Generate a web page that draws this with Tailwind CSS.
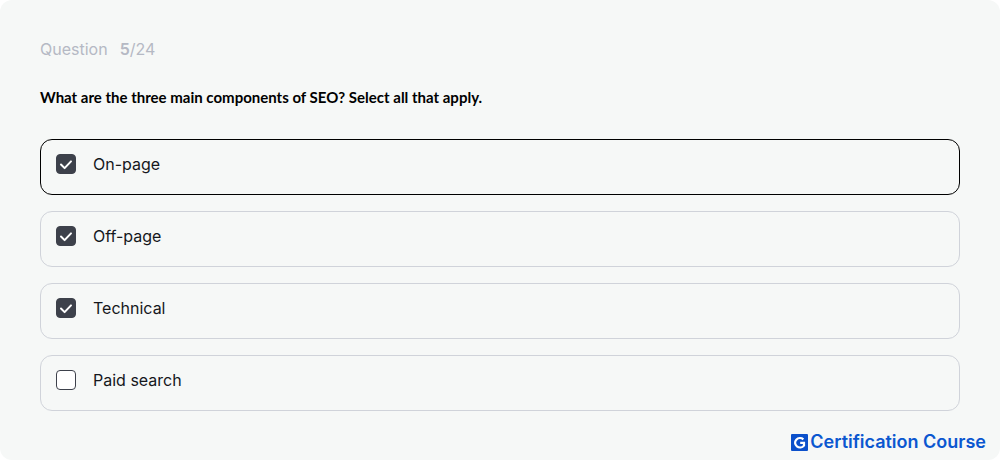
<!DOCTYPE html>
<html lang="en">
<head>
    <meta charset="UTF-8">
    <meta name="viewport" content="width=device-width, initial-scale=1.0">
    <title>Certification Course</title>
    <script src="https://cdn.jsdelivr.net/npm/@tailwindcss/browser@4"></script>
</head>
<body class="bg-white font-['Inter',sans-serif]">

    <main class="min-h-screen flex flex-col rounded-xl bg-[#f6f8f7] px-10 pt-[39px] pb-2">
        <p class="flex gap-3 text-base leading-5 text-[#b5b9c4]">
            <span>Question</span>
            <span><b class="font-semibold">5</b>/24</span>
        </p>

        <form class="mt-7">
            <fieldset>
                <legend class="font-['Lato',sans-serif] text-[15px] leading-5 font-bold text-black">What are the three main components of SEO? Select all that apply.</legend>

                <div class="mt-8 flex flex-col gap-4">
                    <label for="on-page" class="flex h-14 gap-[17px] rounded-xl border border-black px-[15px] pt-3.5 text-base leading-5 text-[#15171c]">
                        <span class="grid h-5 w-5">
                            <input type="checkbox" id="on-page" name="answer" checked class="peer col-start-1 row-start-1 h-5 w-5 appearance-none rounded border border-[#3d414b] bg-white checked:bg-[#3d414b]">
                            <svg class="pointer-events-none invisible col-start-1 row-start-1 peer-checked:visible" width="20" height="20" viewBox="0 0 20 20" fill="none" stroke="white" stroke-width="2" stroke-linecap="round" stroke-linejoin="round"><path d="M5 10.5l3.6 3.6L15 7.4"/></svg>
                        </span>
                        On-page
                    </label>

                    <label for="off-page" class="flex h-14 gap-[17px] rounded-xl border border-[#d0d3da] px-[15px] pt-3.5 text-base leading-5 text-[#15171c]">
                        <span class="grid h-5 w-5">
                            <input type="checkbox" id="off-page" name="answer" checked class="peer col-start-1 row-start-1 h-5 w-5 appearance-none rounded border border-[#3d414b] bg-white checked:bg-[#3d414b]">
                            <svg class="pointer-events-none invisible col-start-1 row-start-1 peer-checked:visible" width="20" height="20" viewBox="0 0 20 20" fill="none" stroke="white" stroke-width="2" stroke-linecap="round" stroke-linejoin="round"><path d="M5 10.5l3.6 3.6L15 7.4"/></svg>
                        </span>
                        Off-page
                    </label>

                    <label for="technical" class="flex h-14 gap-[17px] rounded-xl border border-[#d0d3da] px-[15px] pt-3.5 text-base leading-5 text-[#15171c]">
                        <span class="grid h-5 w-5">
                            <input type="checkbox" id="technical" name="answer" checked class="peer col-start-1 row-start-1 h-5 w-5 appearance-none rounded border border-[#3d414b] bg-white checked:bg-[#3d414b]">
                            <svg class="pointer-events-none invisible col-start-1 row-start-1 peer-checked:visible" width="20" height="20" viewBox="0 0 20 20" fill="none" stroke="white" stroke-width="2" stroke-linecap="round" stroke-linejoin="round"><path d="M5 10.5l3.6 3.6L15 7.4"/></svg>
                        </span>
                        Technical
                    </label>

                    <label for="paid-search" class="flex h-14 gap-[17px] rounded-xl border border-[#d0d3da] px-[15px] pt-3.5 text-base leading-5 text-[#15171c]">
                        <span class="grid h-5 w-5">
                            <input type="checkbox" id="paid-search" name="answer" class="peer col-start-1 row-start-1 h-5 w-5 appearance-none rounded border border-[#3d414b] bg-white checked:bg-[#3d414b]">
                            <svg class="pointer-events-none invisible col-start-1 row-start-1 peer-checked:visible" width="20" height="20" viewBox="0 0 20 20" fill="none" stroke="white" stroke-width="2" stroke-linecap="round" stroke-linejoin="round"><path d="M5 10.5l3.6 3.6L15 7.4"/></svg>
                        </span>
                        Paid search
                    </label>
                </div>
            </fieldset>
        </form>

        <footer class="-mr-[26px] mt-auto flex items-center justify-end gap-0.5 text-[#0b57d0]">
            <svg width="17" height="17" viewBox="0 0 17 17" fill="none"><rect width="17" height="17" rx="1" fill="#0b50cb"/><path d="M12.4 5.3A5 4.6 0 1 0 13 11.6V8.8H9.2" stroke="white" stroke-width="2.2"/></svg>
            <span class="text-lg leading-5 font-semibold">Certification Course</span>
        </footer>
    </main>

</body>
</html>
